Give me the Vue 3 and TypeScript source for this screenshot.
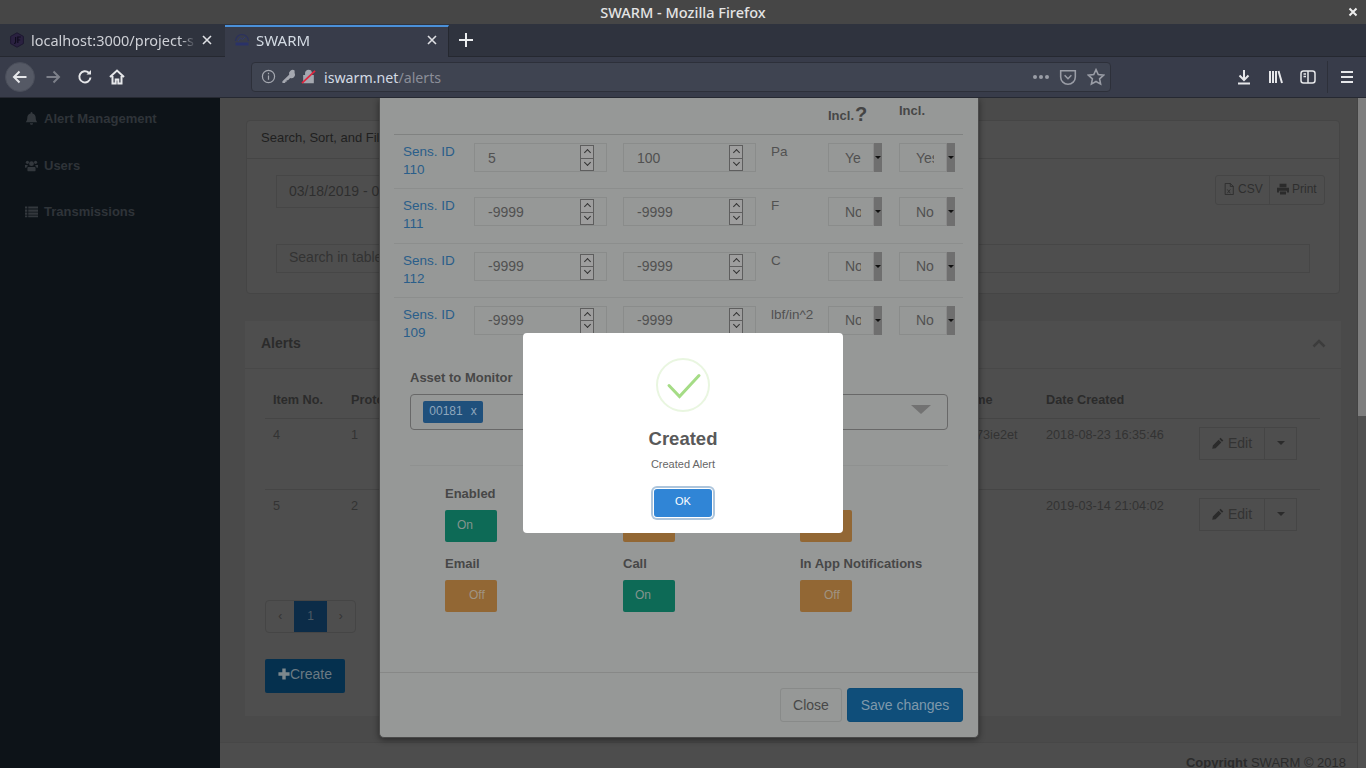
<template>
  <div class="window">
    <!-- Firefox chrome -->
    <div class="titlebar">
      <span class="title">SWARM - Mozilla Firefox</span>
      <svg class="win-close" viewBox="0 0 10 10"><path d="M1.5 1.5l7 7M8.5 1.5l-7 7" /></svg>
    </div>

    <div class="tabbar">
      <div class="tab">
        <svg class="favicon" viewBox="0 0 16 16">
          <path d="M8 .8l6.4 3.6v7.2L8 15.2l-6.4-3.6V4.4z" fill="#2a2140" stroke="#1d1830" />
          <path d="M6.6 5v5q0 1.5-1.6 1.5M8.8 11V5h3M8.8 8h2.4" fill="none" stroke="#0f0c1c" stroke-width="1.2" />
        </svg>
        <span class="tab-label">localhost:3000/project-s</span>
        <svg class="tab-close" viewBox="0 0 10 10"><path d="M1 1l8 8M9 1l-8 8" /></svg>
      </div>
      <div class="tab active">
        <svg class="favicon" viewBox="0 0 16 16">
          <path d="M1.5 9a6.5 6.5 0 0 1 13 0" fill="none" stroke="#2b3160" stroke-width="1.2" />
          <path d="M4 9l2.5-3 2 1.5L11 5" fill="none" stroke="#2f3a70" />
          <rect x="1.5" y="10.5" width="13" height="3" fill="#2a3268" />
        </svg>
        <span class="tab-label">SWARM</span>
        <svg class="tab-close" viewBox="0 0 10 10"><path d="M1 1l8 8M9 1l-8 8" /></svg>
      </div>
      <svg class="new-tab" viewBox="0 0 14 14"><path d="M7 0v14M0 7h14" /></svg>
    </div>

    <div class="navbar">
      <button class="back-btn">
        <svg viewBox="0 0 16 16" class="tool"><path d="M14.5 8H2M7.5 2.5L2 8l5.500 5.500" /></svg>
      </button>
      <button class="tool-btn">
        <svg viewBox="0 0 16 16" class="tool dim"><path d="M1.500 8H14M8.500 2.500L14 8l-5.500 5.500" /></svg>
      </button>
      <button class="tool-btn">
        <svg viewBox="0 0 16 16" class="tool"><path d="M13.500 8.500A5.600 5.600 0 1 1 11.800 3.800" /><path d="M14 1v4.500H9.500" fill="#e6e7ea" stroke="none" /></svg>
      </button>
      <button class="tool-btn">
        <svg viewBox="0 0 16 16" class="tool"><path d="M1 8l7-6.500L15 8M3.500 7v7.500h3.200v-4h2.600v4h3.200V7" /></svg>
      </button>

      <div class="urlbar">
        <svg viewBox="0 0 16 16" class="url-icon"><circle cx="8" cy="8" r="6.500" /><path d="M8 7v4.500M8 4v1.600" /></svg>
        <svg viewBox="0 0 16 16" class="url-icon solid"><path d="M14.500 1.500a4 4 0 0 0-5.800 4.600L1.500 13v2h3v-1.500H6V12h1.500l2.300-2.300a4 4 0 0 0 4.700-5.700z" /></svg>
        <svg viewBox="0 0 16 16" class="url-icon lock">
          <path d="M3 7h10v7.500H3zM5 7V4.500a3 3 0 0 1 6 0V7" />
          <path class="slash" d="M1 15L15 2" />
        </svg>
        <span class="url"><span class="host">iswarm.net</span>/alerts</span>
        <span class="url-spacer"></span>
        <span class="dots"><i></i><i></i><i></i></span>
        <svg viewBox="0 0 16 16" class="url-icon action"><path d="M1.500 2.500h13v5.500a6.500 6.500 0 0 1-13 0z" /><path d="M5 6.500l3 3 3-3" /></svg>
        <svg viewBox="0 0 16 16" class="url-icon action"><path d="M8 1.500l2 4.300 4.700.6-3.500 3.200.9 4.700L8 12l-4.100 2.300.9-4.700L1.300 6.400 6 5.800z" /></svg>
      </div>

      <button class="tool-btn first-right">
        <svg viewBox="0 0 16 16" class="tool"><path d="M8 1v10M3.500 6.500L8 11l4.500-4.500M2 14.500h12" /></svg>
      </button>
      <button class="tool-btn">
        <svg viewBox="0 0 16 16" class="tool"><path d="M2 2v12M5 2v12M8 2v12M10.500 2l3.500 12" /></svg>
      </button>
      <button class="tool-btn">
        <svg viewBox="0 0 16 16" class="tool thin"><rect x="1" y="2" width="14" height="12" rx="2.500" /><path d="M8 2v12M3.500 5H6M3.500 7.500H6" /></svg>
      </button>
      <span class="tool-sep"></span>
      <button class="tool-btn">
        <svg viewBox="0 0 16 16" class="tool"><path d="M2 3h12M2 8h12M2 13h12" /></svg>
      </button>
    </div>

    <!-- Page -->
    <div class="viewport">
      <aside class="sidebar">
        <a v-for="item in navItems" :key="item.label" class="nav-item">
          <svg v-if="item.icon === 'bell'" viewBox="0 0 14 14" class="nav-icon"><path d="M7 0a1 1 0 0 1 1 1v.6c2.300.4 3.500 2.300 3.500 4.400 0 3 .9 3.900 1.800 5H.7c.9-1.100 1.800-2 1.800-5 0-2.100 1.200-4 3.500-4.400V1a1 1 0 0 1 1-1zM5.300 12h3.400a1.700 1.700 0 0 1-3.400 0z" /></svg>
          <svg v-else-if="item.icon === 'users'" viewBox="0 0 14 14" class="nav-icon"><circle cx="7" cy="5" r="2.600" /><circle cx="2.600" cy="3.600" r="1.700" /><circle cx="11.400" cy="3.600" r="1.700" /><path d="M3.600 8.500h6.800c.7 0 1 .6 1 1.500v2c0 .8-.6 1.300-1.300 1.300H3.900c-.7 0-1.300-.5-1.300-1.300v-2c0-.9.300-1.500 1-1.500zM0 6.500h2.800v1.200C2 8 1.700 8.500 1.600 9.500H.6C.2 9.500 0 9.200 0 8.800zM14 6.500h-2.800v1.200c.8.300 1.100.8 1.200 1.800h1c.4 0 .6-.3.6-.7z" /></svg>
          <svg v-else viewBox="0 0 14 14" class="nav-icon"><path d="M0 1.500h2.500v2.400H0zM3.500 1.500H14v2.400H3.500zM0 4.800h2.500v2.400H0zM3.500 4.800H14v2.400H3.500zM0 8.100h2.500v2.400H0zM3.500 8.100H14v2.400H3.500zM0 11.400h2.500v1.800H0zM3.500 11.400H14v1.800H3.500z" /></svg>
          <span>{{ item.label }}</span>
        </a>
      </aside>

      <main class="main">
        <section class="card filter-card">
          <header class="filter-head">Search, Sort, and Filter</header>
          <div class="filter-body">
            <div class="filter-row">
              <div class="date-input">03/18/2019 - 03/18/2019</div>
              <div class="btn-group">
                <button class="group-btn csv">
                  <svg viewBox="0 0 12 14" class="btn-icon"><path class="outline" d="M1.500.5h6l3.500 3.500v9.500h-9.500zM7.500.5V4H11" /><path class="outline" d="M4 7.500l3.500 4.500M7.500 7.500L4 12" /></svg>
                  CSV
                </button>
                <button class="group-btn">
                  <svg viewBox="0 0 14 14" class="btn-icon"><path d="M3 1h8v4H3zM0 5.500h14v5.500h-2.500V9h-9v2H0zM3.500 10h7v3.500h-7z" /></svg>
                  Print
                </button>
              </div>
            </div>
            <div class="table-search">Search in table</div>
          </div>
        </section>

        <section class="card alerts-card">
          <header class="alerts-head">
            <h3>Alerts</h3>
            <svg viewBox="0 0 14 9" class="chevron"><path d="M1.500 7.500L7 2l5.500 5.500" /></svg>
          </header>
          <div class="alerts-body">
            <div class="alerts-row head">
              <span>Item No.</span>
              <span>Protocol</span>
              <span>Name</span>
              <span>Date Created</span>
              <span></span>
            </div>
            <div class="alerts-rows">
              <div v-for="row in alerts" :key="row.item" class="alerts-row">
                <span>{{ row.item }}</span>
                <span>{{ row.protocol }}</span>
                <span class="name-cell">{{ row.name }}</span>
                <span>{{ row.created }}</span>
                <div class="edit-group">
                  <button class="edit-btn">
                    <svg viewBox="0 0 14 14" class="btn-icon"><path d="M10 .8l3.200 3.200-1.500 1.500-3.200-3.200zM7.700 3.100l3.200 3.200-6.700 6.700L.3 13.700 1 9.800z" /></svg>
                    Edit
                  </button>
                  <button class="caret-btn"><i class="caret"></i></button>
                </div>
              </div>
            </div>

            <div class="pagination">
              <span class="page-link">‹</span>
              <span class="page-link current">1</span>
              <span class="page-link">›</span>
            </div>

            <button class="create-btn">
              <svg viewBox="0 0 14 14" class="plus"><path d="M5 .5h4V5h4.500v4H9v4.500H5V9H.5V5H5z" /></svg>Create
            </button>
          </div>
        </section>

        <footer class="page-footer"><b>Copyright</b> SWARM © 2018</footer>
      </main>

      <div class="scrollbar"><div class="thumb"></div></div>

      <!-- Edit alert dialog -->
      <div class="modal-layer">
        <div class="modal">
          <div class="modal-body">
            <div class="sensor-row head">
              <span></span>
              <span></span>
              <span></span>
              <span></span>
              <span class="incl first">Incl.<b class="help">?</b></span>
              <span class="incl">Incl.</span>
            </div>
            <div class="sensor-rows">
              <div v-for="s in sensors" :key="s.id" class="sensor-row">
                <a class="sensor-link">Sens. ID<br />{{ s.id }}</a>
                <div class="num-input">
                  {{ s.min }}
                  <span class="spin"><i class="up"></i><i class="down"></i></span>
                </div>
                <div class="num-input">
                  {{ s.max }}
                  <span class="spin"><i class="up"></i><i class="down"></i></span>
                </div>
                <span class="unit">{{ s.unit }}</span>
                <div class="select-box narrow"><span>{{ s.flag }}</span><i class="strip"></i></div>
                <div class="select-box"><span>{{ s.flag }}</span><i class="strip"></i></div>
              </div>
            </div>

            <div class="asset-form">
              <label class="field-label">Asset to Monitor</label>
              <div class="asset-select">
                <span class="tag">00181<span>x</span></span>
                <i class="asset-arrow"></i>
              </div>
              <hr class="divider" />
              <div class="toggle-grid">
                <div v-for="(t, i) in toggles" :key="i" class="toggle-cell">
                  <label class="field-label">{{ t.label || '\u00a0' }}</label>
                  <div class="toggle" :class="t.on ? 'on' : 'off'">{{ t.on ? 'On' : 'Off' }}</div>
                </div>
              </div>
            </div>
          </div>
          <div class="modal-footer">
            <button class="close-btn">Close</button>
            <button class="save-btn">Save changes</button>
          </div>
        </div>
      </div>

      <!-- Success alert -->
      <div class="swal-layer">
        <div class="swal">
          <svg viewBox="0 0 54 54" class="swal-icon">
            <circle cx="27" cy="27" r="26" />
            <path d="M13 27.500l10.500 11L43 17.500" />
          </svg>
          <h2>Created</h2>
          <p>Created Alert</p>
          <button class="ok-btn">OK</button>
        </div>
      </div>
    </div>
  </div>
</template>

<script setup lang="ts">
const navItems = [
  { label: 'Alert Management', icon: 'bell' },
  { label: 'Users', icon: 'users' },
  { label: 'Transmissions', icon: 'list' },
];

const sensors = [
  { id: 110, min: '5', max: '100', unit: 'Pa', flag: 'Yes' },
  { id: 111, min: '-9999', max: '-9999', unit: 'F', flag: 'No' },
  { id: 112, min: '-9999', max: '-9999', unit: 'C', flag: 'No' },
  { id: 109, min: '-9999', max: '-9999', unit: 'lbf/in^2', flag: 'No' },
];

// labels of the second and third toggle are hidden behind the alert
const toggles = [
  { label: 'Enabled', on: true },
  { label: '', on: false },
  { label: '', on: false },
  { label: 'Email', on: false },
  { label: 'Call', on: true },
  { label: 'In App Notifications', on: false },
];

const alerts = [
  { item: 4, protocol: 1, name: '73ie2et', created: '2018-08-23 16:35:46' },
  { item: 5, protocol: 2, name: '', created: '2019-03-14 21:04:02' },
];
</script>

<style>
html,
body {
  margin: 0;
  overflow: hidden;
}
</style>

<style scoped>
* {
  box-sizing: border-box;
}

button {
  font-family: inherit;
  padding: 0;
}

.window {
  width: 1366px;
  height: 768px;
  display: flex;
  flex-direction: column;
  overflow: hidden;
  font-family: "Liberation Sans", Arial, sans-serif;
  background: #4a4a4a;
}

/* browser chrome */
.titlebar {
  height: 24px;
  flex: none;
  background: #464646;
  display: flex;
  align-items: center;
  justify-content: center;
  position: relative;
}

.title {
  font-family: "Noto Sans", sans-serif;
  font-size: 14.500px;
  font-weight: 500;
  color: #e4e4e4;
}

.win-close {
  position: absolute;
  right: 8px;
  top: 7px;
  width: 10px;
  height: 10px;
  fill: none;
  stroke: #eee;
  stroke-width: 2;
}

.tabbar {
  height: 33px;
  flex: none;
  display: flex;
  align-items: stretch;
  background: #2f333e;
  border-bottom: 1px solid #252830;
  font-family: "Noto Sans", sans-serif;
}

.tab {
  width: 225px;
  display: flex;
  align-items: center;
  padding: 0 13px 0 9px;
  color: #ced0d6;
  font-size: 14.500px;
}

.tab.active {
  width: 224px;
  background: #383c4a;
  border-top: 2px solid #4a90d9;
  border-right: 1px solid #252830;
  height: 33px;
  margin-top: 1px;
  padding: 0 11px 5px 9px;
  color: #d3dae3;
  font-size: 15px;
}

.favicon {
  width: 16px;
  height: 16px;
  flex: none;
  margin-right: 6px;
}

.tab-label {
  flex: 1;
  white-space: nowrap;
  -webkit-mask-image: linear-gradient(to right, #000 150px, transparent 165px);
  mask-image: linear-gradient(to right, #000 150px, transparent 165px);
}

.tab-close {
  width: 10px;
  height: 10px;
  flex: none;
  fill: none;
  stroke: #dfe0e4;
  stroke-width: 1.600;
}

.new-tab {
  width: 14px;
  height: 14px;
  margin: 9px 0 0 10px;
  fill: none;
  stroke: #eceef0;
  stroke-width: 2;
}

.navbar {
  height: 41px;
  flex: none;
  display: flex;
  align-items: center;
  padding: 0 0 1px 5px;
  background: #383c4a;
  border-bottom: 1px solid #262932;
}

.back-btn {
  width: 30px;
  height: 30px;
  margin-right: 2px;
  border-radius: 50%;
  background: #555965;
  border: 1px solid #4a4e5a;
  display: flex;
  align-items: center;
  justify-content: center;
}

.tool-btn {
  width: 32px;
  height: 32px;
  background: none;
  border: 0;
  display: flex;
  align-items: center;
  justify-content: center;
}

.tool {
  width: 16px;
  height: 16px;
  fill: none;
  stroke: #e6e7ea;
  stroke-width: 2;
}

.tool.thin {
  stroke-width: 1.500;
}

.tool.dim {
  stroke: #7d808a;
}

.urlbar {
  width: 860px;
  height: 30px;
  margin-left: 118px;
  display: flex;
  align-items: center;
  padding: 0 5px 0 9px;
  background: #3f4451;
  border: 1px solid #2d303a;
  border-radius: 4px;
  font-family: "Noto Sans", sans-serif;
  font-size: 14.200px;
  color: #8b8e98;
}

.url {
  padding-top: 1px;
}

.url-icon {
  width: 15px;
  height: 15px;
  flex: none;
  margin-right: 5px;
  fill: none;
  stroke: #a5a8b0;
  stroke-width: 1.300;
}

.url-icon.solid {
  fill: #a5a8b0;
  stroke: none;
}

.url-icon.lock {
  fill: #a5a8b0;
  margin-right: 8px;
}

.slash {
  stroke: #e2263f;
  stroke-width: 1.800;
}

.host {
  color: #d3dae3;
}

.url-spacer {
  flex: 1;
}

.dots {
  display: flex;
  gap: 2px;
}

.dots i {
  width: 4px;
  height: 4px;
  border-radius: 50%;
  background: #9a9da6;
}

.url-icon.action {
  width: 18px;
  height: 18px;
  margin: 0 0 0 10px;
  stroke: #9a9da6;
  stroke-width: 1.400;
}

.first-right {
  margin-left: 117px;
}

.tool-sep {
  width: 1px;
  height: 32px;
  margin: 0 3px 0 3px;
  background: #2d303a;
}

/* page under the dialogs */
.viewport {
  flex: 1;
  min-height: 0;
  display: flex;
  position: relative;
  overflow: hidden;
}

.sidebar {
  width: 220px;
  flex: none;
  padding: 11.400px 0 0 25px;
  background: #0d1318;
  display: flex;
  flex-direction: column;
}

.nav-item {
  height: 18px;
  margin-bottom: 28.700px;
  display: flex;
  align-items: center;
  gap: 6px;
  font-size: 13px;
  font-weight: 700;
  color: #2f3439;
}

.nav-icon {
  width: 13px;
  height: 13px;
  fill: #33383d;
}

.main {
  flex: 1;
  min-width: 0;
  display: flex;
  flex-direction: column;
  background: #4a4a4a;
  padding-top: 22px;
}

.card {
  background: #4e4e4e;
}

.filter-card {
  height: 174px;
  margin: 0 17px 27px 26px;
  border: 1px solid #454545;
  border-radius: 4px;
}

.filter-head {
  height: 38px;
  padding: 0 14px 4px;
  display: flex;
  align-items: center;
  border-bottom: 1px solid #454545;
  font-size: 13px;
  color: #1f1f1f;
}

.filter-body {
  padding: 16px 14px 0 29px;
}

.filter-row {
  display: flex;
  justify-content: space-between;
  align-items: flex-start;
  margin-bottom: 36px;
}

.date-input {
  width: 300px;
  height: 33px;
  padding: 0 12px 2px;
  display: flex;
  align-items: center;
  border: 1px solid #464646;
  font-size: 14px;
  color: #2e2e2e;
}

.btn-group {
  height: 30px;
  display: flex;
  border: 1px solid #454545;
  border-radius: 3px;
}

.group-btn {
  width: 55px;
  height: 100%;
  padding: 0 0 3px 7px;
  display: flex;
  align-items: center;
  gap: 3px;
  background: none;
  border: 0;
  font-size: 12px;
  color: #2e2e2e;
}

.group-btn.csv {
  width: 53px;
}

.group-btn + .group-btn {
  border-left: 1px solid #454545;
}

.btn-icon {
  width: 12px;
  height: 12px;
  fill: #2b2b2b;
}

.outline {
  fill: none;
  stroke: #2b2b2b;
  stroke-width: 1;
}

.table-search {
  height: 29px;
  margin-right: 15px;
  padding: 0 12px 3px;
  display: flex;
  align-items: center;
  border: 1px solid #464646;
  font-size: 14px;
  color: #333;
}

.alerts-card {
  height: 396px;
  margin: 0 16px 0 25px;
}

.alerts-head {
  height: 48px;
  padding: 0 15px 2px 16px;
  display: flex;
  align-items: center;
  justify-content: space-between;
  border-bottom: 1px solid #484848;
}

.alerts-head h3 {
  margin: 0;
  font-size: 14px;
  font-weight: 700;
  color: #2b2b2b;
}

.chevron {
  width: 14px;
  height: 9px;
  fill: none;
  stroke: #3c3c3c;
  stroke-width: 2.500;
}

.alerts-body {
  padding: 22px 21px 0 20px;
}

.alerts-row {
  display: grid;
  grid-template-columns: 78px 607px 88px 153px 1fr;
  height: 71px;
  padding-top: 8px;
  border-bottom: 1px solid #454545;
  font-size: 12.700px;
  line-height: 16px;
  color: #333;
}

.alerts-rows .alerts-row:last-child {
  border-bottom: 0;
}

.alerts-row > span {
  padding-left: 8px;
}

.alerts-row.head {
  height: 28px;
  padding-top: 1px;
  font-weight: 700;
  color: #2b2b2b;
}

.name-cell {
  text-indent: 18px;
}

.edit-group {
  height: 33px;
  margin-left: 8px;
  display: flex;
  width: 98px;
  border: 1px solid #454545;
}

.edit-btn {
  width: 64px;
  display: flex;
  align-items: center;
  justify-content: center;
  gap: 4px;
  background: none;
  border: 0;
  font-size: 14px;
  color: #333;
}

.caret-btn {
  flex: 1;
  display: flex;
  align-items: center;
  justify-content: center;
  background: none;
  border: 0;
  border-left: 1px solid #454545;
}

.caret {
  border: 4px solid transparent;
  border-top-color: #2b2b2b;
  border-bottom: 0;
}

.pagination {
  width: 91px;
  height: 33px;
  margin-top: 39px;
  display: flex;
  border: 1px solid #454545;
  border-radius: 4px;
  overflow: hidden;
}

.page-link {
  flex: 29px;
  display: flex;
  align-items: center;
  justify-content: center;
  font-size: 12px;
  color: #333;
}

.page-link.current {
  flex: 33px;
  background: #0c2c48;
  color: #4c5a64;
}

.create-btn {
  width: 80px;
  height: 34px;
  margin-top: 26px;
  padding-bottom: 3px;
  display: flex;
  align-items: center;
  justify-content: center;
  background: #05304e;
  border: 0;
  border-radius: 2px;
  font-size: 14px;
  color: #6b7a83;
}

.plus {
  width: 12px;
  height: 12px;
  fill: #7d888d;
}

.page-footer {
  height: 26px;
  margin-top: 26px;
  padding: 12px 11px 0 0;
  background: #4d4d4d;
  border-top: 1px solid #474747;
  text-align: right;
  font-size: 13px;
  white-space: nowrap;
  color: #2b2b2b;
}

.scrollbar {
  width: 9px;
  flex: none;
  background: #7e7e7e;
  border-left: 1px solid #444;
  padding-top: 318px;
}

.thumb {
  height: 100%;
  background: #505050;
}

/* edit dialog, cut off at the top since the dialog is scrolled */
.modal-layer {
  position: absolute;
  inset: 0 8px 0 0;
  display: flex;
  justify-content: center;
  align-items: flex-start;
}

.modal {
  width: 600px;
  height: 640px;
  display: flex;
  flex-direction: column;
  background: #969897;
  border: 1px solid #4a4a4a;
  border-top: 0;
  border-radius: 0 0 5px 5px;
  box-shadow: 0 2px 6px rgba(0, 0, 0, 0.45);
}

.modal-body {
  flex: 1;
  padding: 0 15px 0 14px;
}

.sensor-row {
  display: grid;
  grid-template-columns: 80px 149px 148px 57px 71px 65px;
  height: 54.330px;
  padding-top: 8px;
  border-bottom: 1px solid #8c8e8d;
  font-size: 14px;
}

.sensor-rows .sensor-row:last-child {
  border-bottom: 0;
}

.sensor-row.head {
  height: 37px;
  padding-top: 0;
  border-bottom: 1px solid #808281;
  font-size: 13px;
  line-height: 16px;
  font-weight: 700;
  color: #474747;
}

.incl {
  padding-top: 5px;
}

.incl.first {
  padding-top: 8px;
}

.help {
  margin-left: 1px;
  font-size: 20px;
  line-height: 16px;
  vertical-align: -1px;
  color: #444;
}

.sensor-link {
  padding-left: 9px;
  font-size: 13.500px;
  line-height: 18px;
  color: #2a5e8a;
}

.num-input {
  width: 133px;
  height: 29px;
  padding-left: 13px;
  display: flex;
  align-items: center;
  position: relative;
  border: 1px solid #8a8c8b;
  color: #515151;
}

.spin {
  position: absolute;
  right: 12px;
  top: 1px;
  width: 14px;
  height: 26px;
  display: flex;
  flex-direction: column;
  border: 1px solid #5e5e5e;
  background: #9e9e9e;
}

.spin i {
  flex: 1;
  position: relative;
  display: block;
}

.spin i.down {
  border-top: 1px solid #5e5e5e;
}

.spin i::after {
  content: "";
  position: absolute;
  left: 4px;
  top: 4px;
  width: 4px;
  height: 4px;
  border-left: 1px solid #333;
  border-top: 1px solid #333;
  transform: rotate(45deg);
}

.spin i.down::after {
  top: 1px;
  transform: rotate(225deg);
}

.unit {
  line-height: 18px;
  font-size: 13.500px;
  color: #515151;
}

.select-box {
  width: 56px;
  height: 29px;
  display: flex;
  align-items: center;
  border: 1px solid #8a8c8b;
  border-right: 0;
  font-size: 14px;
  color: #515151;
}

.select-box.narrow {
  width: 54px;
}

.select-box span {
  width: 18px;
  margin: 0 12px 0 16px;
  overflow: hidden;
  white-space: nowrap;
}

.select-box.narrow span {
  width: 16px;
}

.strip {
  width: 9px;
  height: 29px;
  flex: none;
  position: relative;
  background: #6f6f6f;
  border-left: 1px solid #8a8a8a;
}

.strip::after {
  content: "";
  position: absolute;
  left: 1px;
  top: 13px;
  border: 3px solid transparent;
  border-top-color: #111;
  border-bottom: 0;
}

.asset-form {
  padding: 18px 15px 0 16px;
}

.field-label {
  display: block;
  height: 16px;
  font-size: 13px;
  font-weight: 700;
  line-height: 16px;
  white-space: nowrap;
  color: #474747;
}

.asset-select {
  height: 36px;
  margin-top: 8px;
  padding: 6px 12px;
  display: flex;
  align-items: flex-start;
  justify-content: space-between;
  border: 1px solid #686868;
  border-radius: 4px;
}

.tag {
  width: 60px;
  height: 22px;
  padding-bottom: 3px;
  display: flex;
  align-items: center;
  justify-content: center;
  gap: 8px;
  background: #1f507c;
  border-radius: 2px;
  font-size: 12px;
  color: #8fa7bc;
}

.asset-arrow {
  margin: 4px 4px 0 0;
  border: 10px solid transparent;
  border-top: 9px solid #727272;
  border-bottom: 0;
}

.divider {
  height: 1px;
  margin: 35px 0 20px;
  border: 0;
  background: #8f9190;
}

.toggle-grid {
  padding-left: 35px;
  display: grid;
  grid-template-columns: 178px 177px 1fr;
  row-gap: 14px;
}

.toggle {
  width: 52px;
  height: 32px;
  margin-top: 8px;
  padding-top: 7px;
  border-radius: 2px;
  font-size: 12px;
  line-height: 16px;
  color: #84948e;
}

.toggle.on {
  padding-left: 12px;
  background: #0d6a56;
}

.toggle.off {
  padding-left: 24px;
  background: #926734;
  color: #a09482;
}

.modal-footer {
  height: 65px;
  padding: 15px 15px 0 0;
  display: flex;
  justify-content: flex-end;
  gap: 5px;
  border-top: 1px solid #878887;
}

.close-btn,
.save-btn {
  height: 34px;
  border-radius: 3px;
  font-size: 14px;
}

.close-btn {
  width: 62px;
  background: none;
  border: 1px solid #888a89;
  color: #484848;
}

.save-btn {
  width: 116px;
  background: #0f4e7a;
  border: 1px solid #0e4b75;
  color: #7f99ab;
}

/* success alert over everything in the page */
.swal-layer {
  position: absolute;
  inset: 0;
  display: flex;
  align-items: center;
  justify-content: center;
}

.swal {
  width: 320px;
  height: 200px;
  padding-top: 25px;
  display: flex;
  flex-direction: column;
  align-items: center;
  background: #fff;
  border-radius: 4px;
}

.swal-icon {
  width: 54px;
  height: 54px;
  flex: none;
  fill: none;
}

.swal-icon circle {
  stroke: #e9f6e0;
  stroke-width: 2;
}

.swal-icon path {
  stroke: #a5dc86;
  stroke-width: 3;
  stroke-linecap: round;
}

.swal h2 {
  margin: 16px 0 0;
  font-size: 18.500px;
  line-height: 22px;
  font-weight: 700;
  color: #595959;
}

.swal p {
  margin: 7px 0 0;
  font-size: 11px;
  line-height: 14px;
  color: #666;
}

.ok-btn {
  width: 58px;
  height: 28px;
  margin-top: 18px;
  padding-bottom: 4px;
  background: #3085d6;
  border: 0;
  border-radius: 3px;
  box-shadow: 0 0 0 1px #fff, 0 0 0 3px #adc5dc;
  font-size: 11px;
  color: #fff;
}
</style>
